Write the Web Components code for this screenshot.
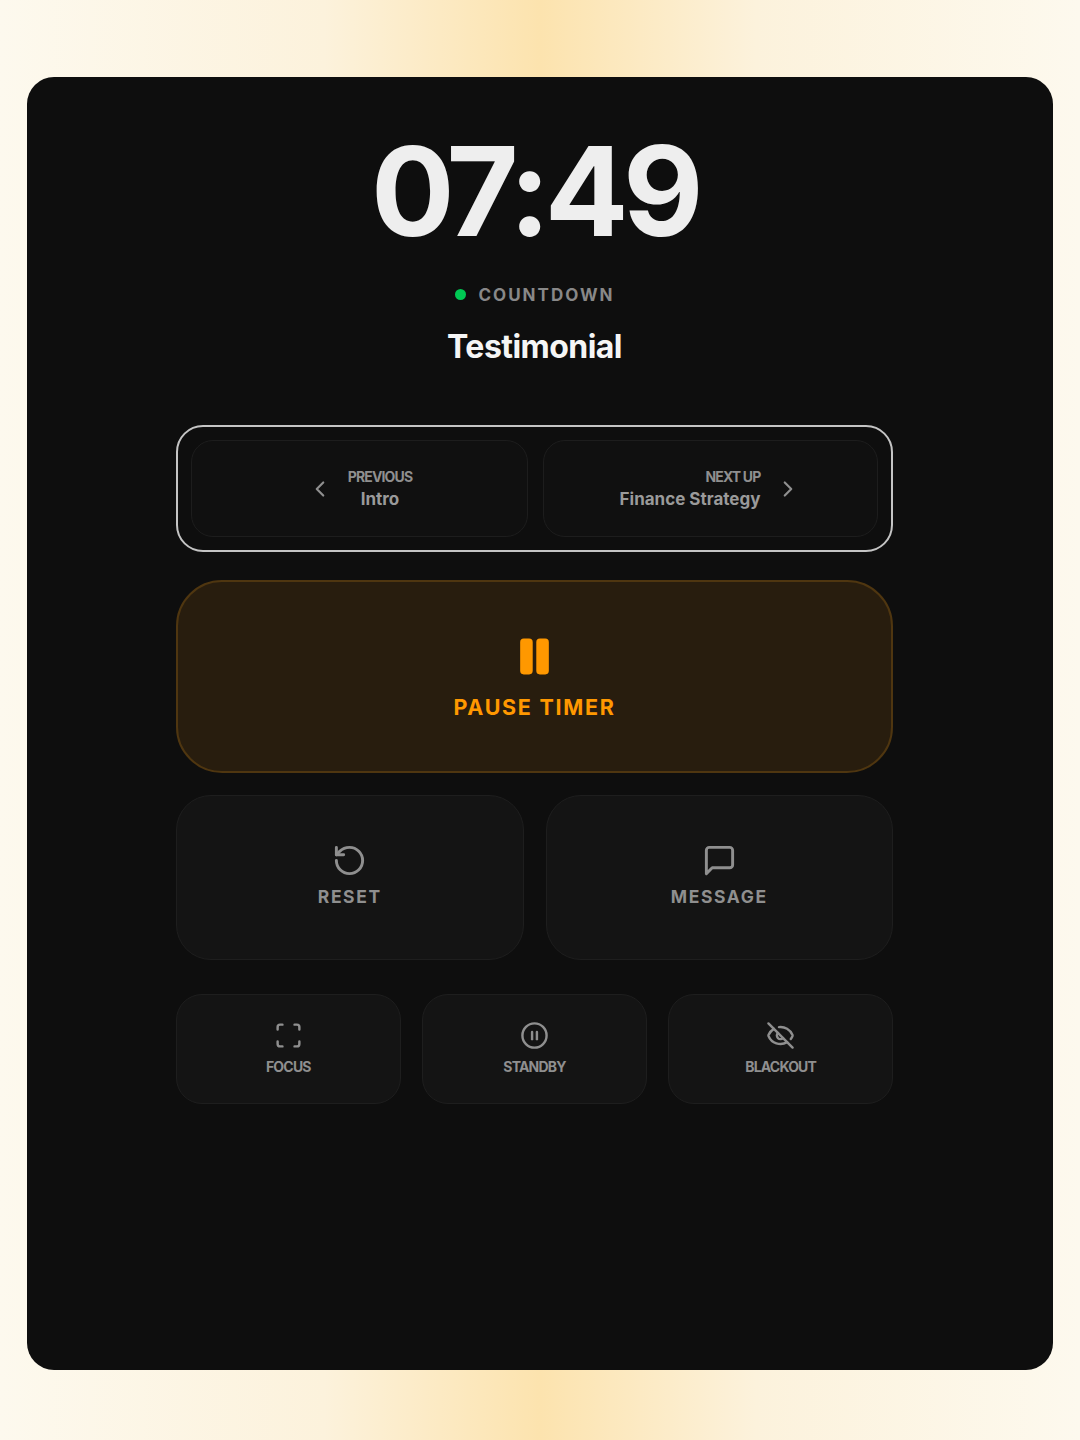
<!DOCTYPE html>
<html lang="en">
<head>
<meta charset="utf-8">
<title>Countdown</title>
<style>
  html, body { margin: 0; padding: 0; }
  body {
    height: 1440px;
    box-sizing: border-box;
    padding: 76.5px 27px 70.5px;
    font-family: Inter, "Liberation Sans", sans-serif;
    background: linear-gradient(90deg, #fdf9ee 0%, #fcf2dc 30%, #fce3ae 50%, #fcf2dc 70%, #fdf9ee 100%);
  }
</style>
</head>
<body>
<stage-panel>
  <timer-head time="07:49" mode="COUNTDOWN" title="Testimonial"></timer-head>
  <nav-group>
    <nav-card dir="prev" label="PREVIOUS" name="Intro"></nav-card>
    <nav-card dir="next" label="NEXT UP" name="Finance Strategy"></nav-card>
  </nav-group>
  <pause-button label="PAUSE TIMER"></pause-button>
  <button-row cols="2" gap="22" top="22.5">
    <action-button size="big" icon="reset" label="RESET"></action-button>
    <action-button size="big" icon="message" label="MESSAGE"></action-button>
  </button-row>
  <button-row cols="3" gap="21.5" top="34">
    <action-button icon="focus" label="FOCUS"></action-button>
    <action-button icon="standby" label="STANDBY"></action-button>
    <action-button icon="blackout" label="BLACKOUT"></action-button>
  </button-row>
</stage-panel>

<script>
// lucide style icon bodies
const ICONS = {
  left: '<path d="m15 18-6-6 6-6"/>',
  right: '<path d="m9 18 6-6-6-6"/>',
  pause: '<rect x="14" y="3" width="5" height="18" rx="1"/><rect x="5" y="3" width="5" height="18" rx="1"/>',
  reset: '<path d="M3 12a9 9 0 1 0 9-9 9.75 9.75 0 0 0-6.74 2.74L3 8"/><path d="M3 3v5h5"/>',
  message: '<path d="M21 15a2 2 0 0 1-2 2H7l-4 4V5a2 2 0 0 1 2-2h14a2 2 0 0 1 2 2z"/>',
  focus: '<path d="M3 7V5a2 2 0 0 1 2-2h2"/><path d="M17 3h2a2 2 0 0 1 2 2v2"/><path d="M21 17v2a2 2 0 0 1-2 2h-2"/><path d="M7 21H5a2 2 0 0 1-2-2v-2"/>',
  standby: '<circle cx="12" cy="12" r="10"/><line x1="10" x2="10" y1="15" y2="9"/><line x1="14" x2="14" y1="15" y2="9"/>',
  blackout: '<path d="M10.733 5.076a10.744 10.744 0 0 1 11.205 6.575 1 1 0 0 1 0 .696 10.747 10.747 0 0 1-1.444 2.49"/><path d="M14.084 14.158a3 3 0 0 1-4.242-4.242"/><path d="M17.479 17.499a10.75 10.75 0 0 1-15.417-5.151 1 1 0 0 1 0-.696 10.75 10.75 0 0 1 4.446-5.143"/><path d="m2 2 20 20"/>'
};

function icon(name, size, extra = '') {
  return `<svg width="${size}" height="${size}" viewBox="0 0 24 24" fill="none" stroke="currentColor" stroke-width="2" stroke-linecap="round" stroke-linejoin="round" ${extra}>${ICONS[name]}</svg>`;
}

class StagePanel extends HTMLElement {
  connectedCallback() {
    if (this.shadowRoot) return;
    const shadow = this.attachShadow({ mode: 'open' });
    shadow.innerHTML = `
      <style>
        :host {
          display: block;
          height: 1293px;
          box-sizing: border-box;
          padding: 0 160px 0 149px;
          background: #0e0e0e;
          border-radius: 27px;
        }
      </style>
      <slot></slot>
    `;
  }
}

class TimerHead extends HTMLElement {
  connectedCallback() {
    if (this.shadowRoot) return;
    const shadow = this.attachShadow({ mode: 'open' });
    shadow.innerHTML = `
      <style>
        :host {
          display: flex;
          flex-direction: column;
          align-items: center;
          height: 348.5px;
          text-align: center;
        }
        .time {
          margin-top: 37px;
          font-size: 124px;
          line-height: 154px;
          font-weight: 700;
          letter-spacing: -5.6px;
          color: #eeeeee;
        }
        .mode {
          display: flex;
          align-items: center;
          gap: 13px;
          margin-top: 15px;
          font-size: 17px;
          line-height: 24px;
          font-weight: 700;
          letter-spacing: 2px;
          color: #888888;
        }
        .dot {
          width: 11px;
          height: 11px;
          border-radius: 50%;
          background: #00c853;
        }
        .title {
          margin-top: 20px;
          font-size: 32px;
          line-height: 40px;
          font-weight: 700;
          letter-spacing: -0.55px;
          color: #f5f5f5;
        }
      </style>
      <div class="time">${this.getAttribute('time')}</div>
      <div class="mode"><span class="dot"></span><span>${this.getAttribute('mode')}</span></div>
      <div class="title">${this.getAttribute('title')}</div>
    `;
  }
}

class NavGroup extends HTMLElement {
  connectedCallback() {
    if (this.shadowRoot) return;
    const shadow = this.attachShadow({ mode: 'open' });
    shadow.innerHTML = `
      <style>
        :host {
          display: grid;
          grid-template-columns: 337px 335px;
          gap: 15px;
          height: 127px;
          box-sizing: border-box;
          padding: 13px;
          border: 2px solid #c4c4c4;
          border-radius: 27px;
        }
      </style>
      <slot></slot>
    `;
  }
}

class NavCard extends HTMLElement {
  connectedCallback() {
    if (this.shadowRoot) return;
    const next = this.getAttribute('dir') === 'next';
    const shadow = this.attachShadow({ mode: 'open' });
    shadow.innerHTML = `
      <style>
        :host {
          display: flex;
          align-items: center;
          justify-content: center;
          gap: 15px;
          background: #101010;
          border: 1px solid #1d1d1d;
          border-radius: 22px;
          color: #8f8f8f;
        }
        .text {
          display: flex;
          flex-direction: column;
          align-items: ${next ? 'flex-end' : 'center'};
        }
        .label {
          font-size: 14px;
          line-height: 20px;
          font-weight: 700;
          letter-spacing: -0.85px;
        }
        .name {
          font-size: 17px;
          line-height: 24px;
          font-weight: 700;
          color: #9a9a9a;
        }
        svg { display: block; }
      </style>
      ${next ? '' : icon('left', 26)}
      <div class="text">
        <span class="label">${this.getAttribute('label')}</span>
        <span class="name">${this.getAttribute('name')}</span>
      </div>
      ${next ? icon('right', 26) : ''}
    `;
  }
}

class PauseButton extends HTMLElement {
  connectedCallback() {
    if (this.shadowRoot) return;
    const shadow = this.attachShadow({ mode: 'open' });
    shadow.innerHTML = `
      <style>
        :host {
          display: flex;
          flex-direction: column;
          align-items: center;
          justify-content: center;
          gap: 15px;
          height: 192.5px;
          margin-top: 28px;
          padding-top: 3px;
          box-sizing: border-box;
          background: #281d0e;
          border: 2px solid #4f3610;
          border-radius: 46px;
          color: #ff9800;
        }
        svg { display: block; }
        .label {
          font-size: 21.5px;
          line-height: 28px;
          font-weight: 700;
          letter-spacing: 1.7px;
        }
      </style>
      ${icon('pause', 43, 'style="fill:currentColor"')}
      <span class="label">${this.getAttribute('label')}</span>
    `;
  }
}

class ButtonRow extends HTMLElement {
  connectedCallback() {
    if (this.shadowRoot) return;
    const shadow = this.attachShadow({ mode: 'open' });
    shadow.innerHTML = `
      <style>
        :host {
          display: grid;
          grid-template-columns: repeat(${this.getAttribute('cols')}, 1fr);
          gap: ${this.getAttribute('gap')}px;
          margin-top: ${this.getAttribute('top')}px;
        }
      </style>
      <slot></slot>
    `;
  }
}

class ActionButton extends HTMLElement {
  connectedCallback() {
    if (this.shadowRoot) return;
    const big = this.getAttribute('size') === 'big';
    const shadow = this.attachShadow({ mode: 'open' });
    shadow.innerHTML = `
      <style>
        :host {
          display: flex;
          flex-direction: column;
          align-items: center;
          justify-content: center;
          gap: 7.5px;
          height: ${big ? 165 : 110}px;
          padding-bottom: ${big ? 3 : 0}px;
          box-sizing: border-box;
          background: #141414;
          border: 1px solid #1e1e1e;
          border-radius: ${big ? 35 : 26}px;
          color: #8f8f8f;
        }
        svg { display: block; }
        .label {
          font-size: ${big ? 17.5 : 14}px;
          line-height: ${big ? 24 : 20}px;
          font-weight: 700;
          letter-spacing: ${big ? '1.6px' : '-0.8px'};
        }
      </style>
      ${icon(this.getAttribute('icon'), big ? 35 : 29)}
      <span class="label">${this.getAttribute('label')}</span>
    `;
  }
}

customElements.define('stage-panel', StagePanel);
customElements.define('timer-head', TimerHead);
customElements.define('nav-group', NavGroup);
customElements.define('nav-card', NavCard);
customElements.define('pause-button', PauseButton);
customElements.define('button-row', ButtonRow);
customElements.define('action-button', ActionButton);
</script>
</body>
</html>
